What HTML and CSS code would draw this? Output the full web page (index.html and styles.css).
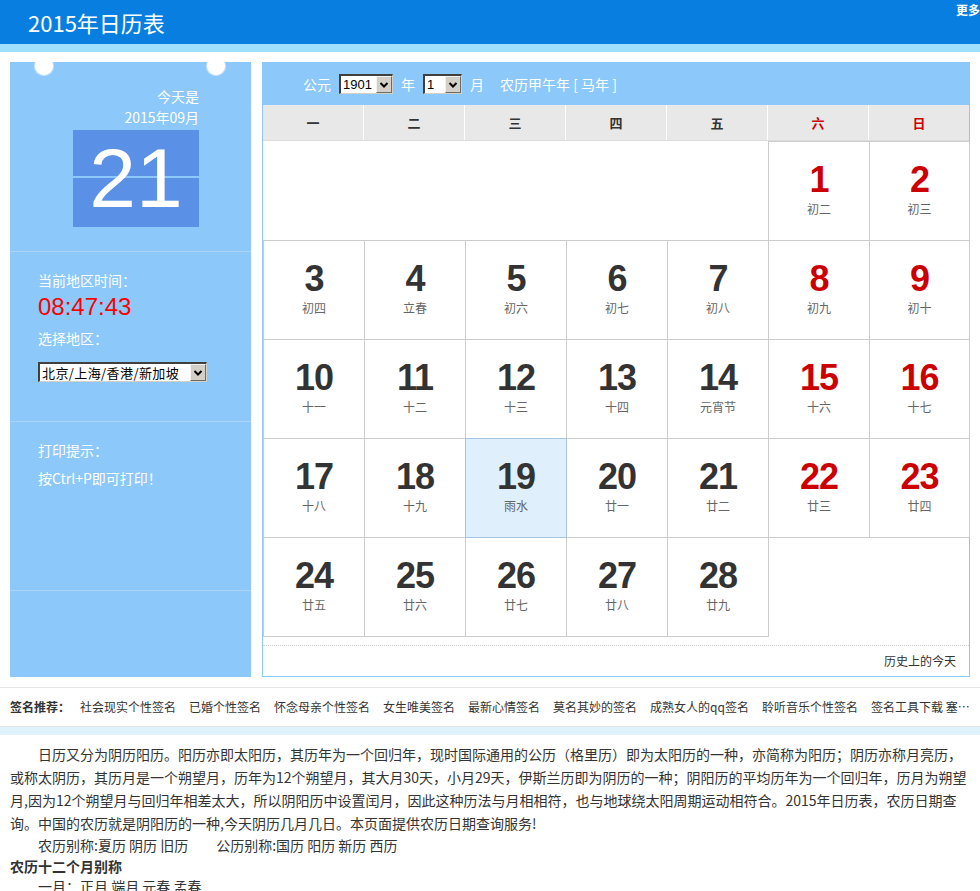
FILE: index.html
```html
<!DOCTYPE html>
<html lang="zh-CN">
<head>
<meta charset="utf-8">
<title>2015年日历表</title>
<link rel="stylesheet" href="styles.css">
</head>
<body>
<header class="top">
  <h1 class="title">2015年日历表</h1>
  <a class="more">更多</a>
</header>
<div class="band"></div>
<main class="main">
  <aside class="side">
    <span class="hole hole-l"></span><span class="hole hole-r"></span>
    <section class="sec sec-today">
      <div class="today-text">今天是<br>2015年09月</div>
      <div class="today-day">21</div>
    </section>
    <section class="sec sec-time">
      <div class="lbl">当前地区时间：</div>
      <div class="clock">08:47:43</div>
      <div class="lbl lbl-gap2">选择地区：</div>
      <span class="sel sel-area"><span class="sel-val">北京/上海/香港/新加坡</span><span class="sel-btn"><svg width="12" height="10" viewBox="0 0 12 10"><path d="M2.5 3 L6 6.5 L9.5 3" fill="none" stroke="#000" stroke-width="2"/></svg></span></span>
    </section>
    <section class="sec sec-print">
      <div class="lbl">打印提示：</div>
      <div class="lbl lbl-gap">按Ctrl+P即可打印！</div>
    </section>
    <section class="sec sec-empty"></section>
  </aside>

  <div class="cal">
    <div class="cal-bar">
      <span>公元</span>
      <span class="sel sel-year"><span class="sel-val">1901</span><span class="sel-btn"><svg width="12" height="10" viewBox="0 0 12 10"><path d="M2.5 3 L6 6.5 L9.5 3" fill="none" stroke="#000" stroke-width="2"/></svg></span></span>
      <span>年</span>
      <span class="sel sel-month"><span class="sel-val">1</span><span class="sel-btn"><svg width="12" height="10" viewBox="0 0 12 10"><path d="M2.5 3 L6 6.5 L9.5 3" fill="none" stroke="#000" stroke-width="2"/></svg></span></span>
      <span>月</span>
      <span class="lunar-year">农历甲午年 [ 马年 ]</span>
    </div>
    <div class="week">
      <span>一</span><span>二</span><span>三</span><span>四</span><span>五</span><span class="we">六</span><span class="we">日</span>
    </div>
    <div class="days">
      <div class="blank-lead"></div>
      <div class="day we"><b>1</b><i>初二</i></div>
      <div class="day we"><b>2</b><i>初三</i></div>

      <div class="day"><b>3</b><i>初四</i></div>
      <div class="day"><b>4</b><i>立春</i></div>
      <div class="day"><b>5</b><i>初六</i></div>
      <div class="day"><b>6</b><i>初七</i></div>
      <div class="day"><b>7</b><i>初八</i></div>
      <div class="day we"><b>8</b><i>初九</i></div>
      <div class="day we"><b>9</b><i>初十</i></div>

      <div class="day"><b>10</b><i>十一</i></div>
      <div class="day"><b>11</b><i>十二</i></div>
      <div class="day"><b>12</b><i>十三</i></div>
      <div class="day"><b>13</b><i>十四</i></div>
      <div class="day"><b>14</b><i>元宵节</i></div>
      <div class="day we"><b>15</b><i>十六</i></div>
      <div class="day we"><b>16</b><i>十七</i></div>

      <div class="day"><b>17</b><i>十八</i></div>
      <div class="day"><b>18</b><i>十九</i></div>
      <div class="day cur"><b>19</b><i>雨水</i></div>
      <div class="day"><b>20</b><i>廿一</i></div>
      <div class="day"><b>21</b><i>廿二</i></div>
      <div class="day we"><b>22</b><i>廿三</i></div>
      <div class="day we"><b>23</b><i>廿四</i></div>

      <div class="day"><b>24</b><i>廿五</i></div>
      <div class="day"><b>25</b><i>廿六</i></div>
      <div class="day"><b>26</b><i>廿七</i></div>
      <div class="day"><b>27</b><i>廿八</i></div>
      <div class="day"><b>28</b><i>廿九</i></div>
    </div>
    <div class="cal-foot"><a>历史上的今天</a></div>
  </div>
</main>

<div class="sign">
  <b>签名推荐：</b><a>社会现实个性签名</a><a>已婚个性签名</a><a>怀念母亲个性签名</a><a>女生唯美签名</a><a>最新心情签名</a><a>莫名其妙的签名</a><a>成熟女人的qq签名</a><a>聆听音乐个性签名</a><a>签名工具下载 塞外情歌个性签名</a>
</div>
<div class="band2"></div>

<article class="article">
  <p class="intro">日历又分为阴历阳历。阳历亦即太阳历，其历年为一个回归年，现时国际通用的公历（格里历）即为太阳历的一种，亦简称为阳历；阴历亦称月亮历，或称太阴历，其历月是一个朔望月，历年为12个朔望月，其大月30天，小月29天，伊斯兰历即为阴历的一种；阴阳历的平均历年为一个回归年，历月为朔望月,因为12个朔望月与回归年相差太大，所以阴阳历中设置闰月，因此这种历法与月相相符，也与地球绕太阳周期运动相符合。2015年日历表，农历日期查询。中国的农历就是阴阳历的一种,今天阴历几月几日。本页面提供农历日期查询服务!</p>
  <p class="alias">农历别称:夏历 阴历 旧历&emsp;&emsp;公历别称:国历 阳历 新历 西历</p>
  <h2 class="subhead">农历十二个月别称</h2>
  <p class="month">一月：正月 端月 元春 孟春</p>
</article>
</body>
</html>
```

FILE: styles.css
```css
html, body {
  margin: 0;
  padding: 0;
}
body {
  width: 980px;
  font-family: "Noto Sans CJK SC", "Noto Sans", sans-serif;
  color: #333;
  background: #fff;
}
a { color: inherit; text-decoration: none; }

/* header */
.top {
  height: 44px;
  background: #087fe0;
  display: flex;
  justify-content: space-between;
}
.title {
  margin: 0;
  padding-left: 28px;
  font-size: 22px;
  font-weight: normal;
  line-height: 44px;
  color: #fff;
}
.more {
  align-self: flex-start;
  margin-top: 2px;
  font-size: 12px;
  line-height: 16px;
  font-weight: bold;
  color: #fff;
}
.band {
  height: 8px;
  background: #9fe0ff;
}

/* main area */
.main {
  display: flex;
  gap: 11px;
  padding: 10px 10px 0;
}

/* left panel */
.side {
  position: relative;
  width: 241px;
  flex: none;
  background: #8cc8fa;
  display: flex;
  flex-direction: column;
  color: #fff;
  font-size: 14px;
}
.hole {
  position: absolute;
  top: -5px;
  width: 18px;
  height: 18px;
  border-radius: 50%;
  background: #fff;
  box-shadow: 0 0 1px 1px rgba(255, 255, 255, 0.6);
}
.hole-l { left: 25px; }
.hole-r { left: 197px; }

.sec {
  border-bottom: 1px solid #acd4f6;
}
.sec-today {
  padding: 24px 0 24px 63px;
}
.today-text {
  width: 126px;
  text-align: right;
  line-height: 21px;
}
.today-day {
  margin-top: 2px;
  width: 126px;
  height: 97px;
  background: linear-gradient(to bottom, #5a90e5 0, #5a90e5 46px, #8cc8fa 46px, #8cc8fa 48px, #5a90e5 48px, #5a90e5 100%);
  font-family: "Liberation Sans", Arial, sans-serif;
  font-size: 84px;
  line-height: 97px;
  text-align: center;
  color: #fff;
}
.sec-time {
  padding: 18px 0 39px 28px;
}
.lbl {
  line-height: 20px;
}
.lbl-gap {
  margin-top: 8px;
}
.lbl-gap2 {
  margin-top: 6px;
}
.clock {
  margin-top: 2px;
  font-family: "Liberation Sans", Arial, sans-serif;
  font-size: 24px;
  line-height: 30px;
  color: #ff0000;
}
.sec-time .sel {
  margin-top: 14px;
}
.sec-print {
  padding: 18px 0 102px 28px;
}
.sec-empty {
  flex: 1;
  border-bottom: none;
}

/* fake selects */
.sel {
  display: flex;
  box-sizing: border-box;
  height: 20px;
  border-style: solid;
  border-width: 2px 1px 1px 2px;
  border-color: #404040 #d4d0c8 #d4d0c8 #404040;
  background: #fff;
  color: #000;
}
.sel-val {
  flex: 1;
  padding-left: 2px;
  line-height: 17px;
  white-space: nowrap;
  overflow: hidden;
}
.sel-btn {
  flex: none;
  width: 16px;
  box-sizing: border-box;
  background: #d4d0c8;
  border: 1px solid;
  border-color: #f4f2ee #6f6d68 #6f6d68 #f4f2ee;
  display: flex;
  align-items: center;
  justify-content: center;
}
.sel-area {
  width: 169px;
  font-size: 13px;
  letter-spacing: 0.4px;
}
.sel-year {
  width: 54px;
  font-family: "Liberation Sans", Arial, sans-serif;
  font-size: 13px;
}
.sel-month {
  width: 39px;
  font-family: "Liberation Sans", Arial, sans-serif;
  font-size: 13px;
}

/* right calendar */
.cal {
  width: 706px;
  flex: none;
  border: 1px solid #8cc8fa;
}
.cal-bar {
  height: 42px;
  background: #8cc8fa;
  display: flex;
  align-items: center;
  gap: 8px;
  padding-left: 40px;
  color: #fff;
  font-size: 14px;
}
.lunar-year {
  margin-left: 8px;
}
.week {
  display: grid;
  grid-template-columns: repeat(6, 101px) 100px;
  height: 35px;
  background: #e8e8e8;
  border-bottom: 1px solid #dcdcdc;
  font-size: 13px;
  font-weight: bold;
  line-height: 35px;
  text-align: center;
  color: #333;
}
.week span {
  border-right: 1px solid #fff;
}
.week span:last-child {
  border-right: none;
}
.week .we {
  color: #c00;
}
.days {
  display: grid;
  grid-template-columns: repeat(6, 101px) 100px;
  grid-template-rows: repeat(5, 99px);
}
.blank-lead {
  grid-column: span 5;
}
.day {
  border: 1px solid #ccc;
  margin: 0 -1px -1px 0;
  padding-top: 20px;
  text-align: center;
  background: #fff;
}
.day b {
  display: block;
  font-family: "Liberation Sans", Arial, sans-serif;
  font-size: 36px;
  font-weight: bold;
  line-height: 36px;
  color: #333;
  letter-spacing: -1px;
}
.day i {
  display: block;
  margin-top: 3px;
  font-style: normal;
  font-size: 12px;
  line-height: 16px;
  color: #666;
}
.day.we b {
  color: #c00;
}
.day.cur {
  position: relative;
  z-index: 1;
  background: #dfeffc;
  border-color: #a8c4e4;
}
.cal-foot {
  margin-top: 9px;
  border-top: 1px dotted #ccc;
  height: 30px;
  line-height: 30px;
  padding-right: 13px;
  text-align: right;
  font-size: 12px;
  color: #333;
}

/* signature row */
.sign {
  margin-top: 10px;
  height: 38px;
  line-height: 38px;
  padding: 0 10px;
  border-top: 1px solid #e6e6e6;
  border-bottom: 1px solid #e6e6e6;
  font-size: 12px;
  white-space: nowrap;
  overflow: hidden;
  text-overflow: ellipsis;
  color: #333;
}
.sign b {
  margin-right: 10px;
}
.sign a {
  margin-right: 13px;
}
.band2 {
  height: 8px;
  background: #dff3fd;
}

/* article */
.article {
  padding: 8px 10px 0;
  font-size: 14px;
  color: #333;
}
.article p {
  margin: 0;
}
.intro {
  line-height: 23px;
  text-indent: 28px;
}
.alias {
  line-height: 20px;
  text-indent: 28px;
}
.subhead {
  margin: 0;
  font-size: 14px;
  font-weight: bold;
  line-height: 22px;
}
.month {
  line-height: 18px;
  text-indent: 28px;
}
```
